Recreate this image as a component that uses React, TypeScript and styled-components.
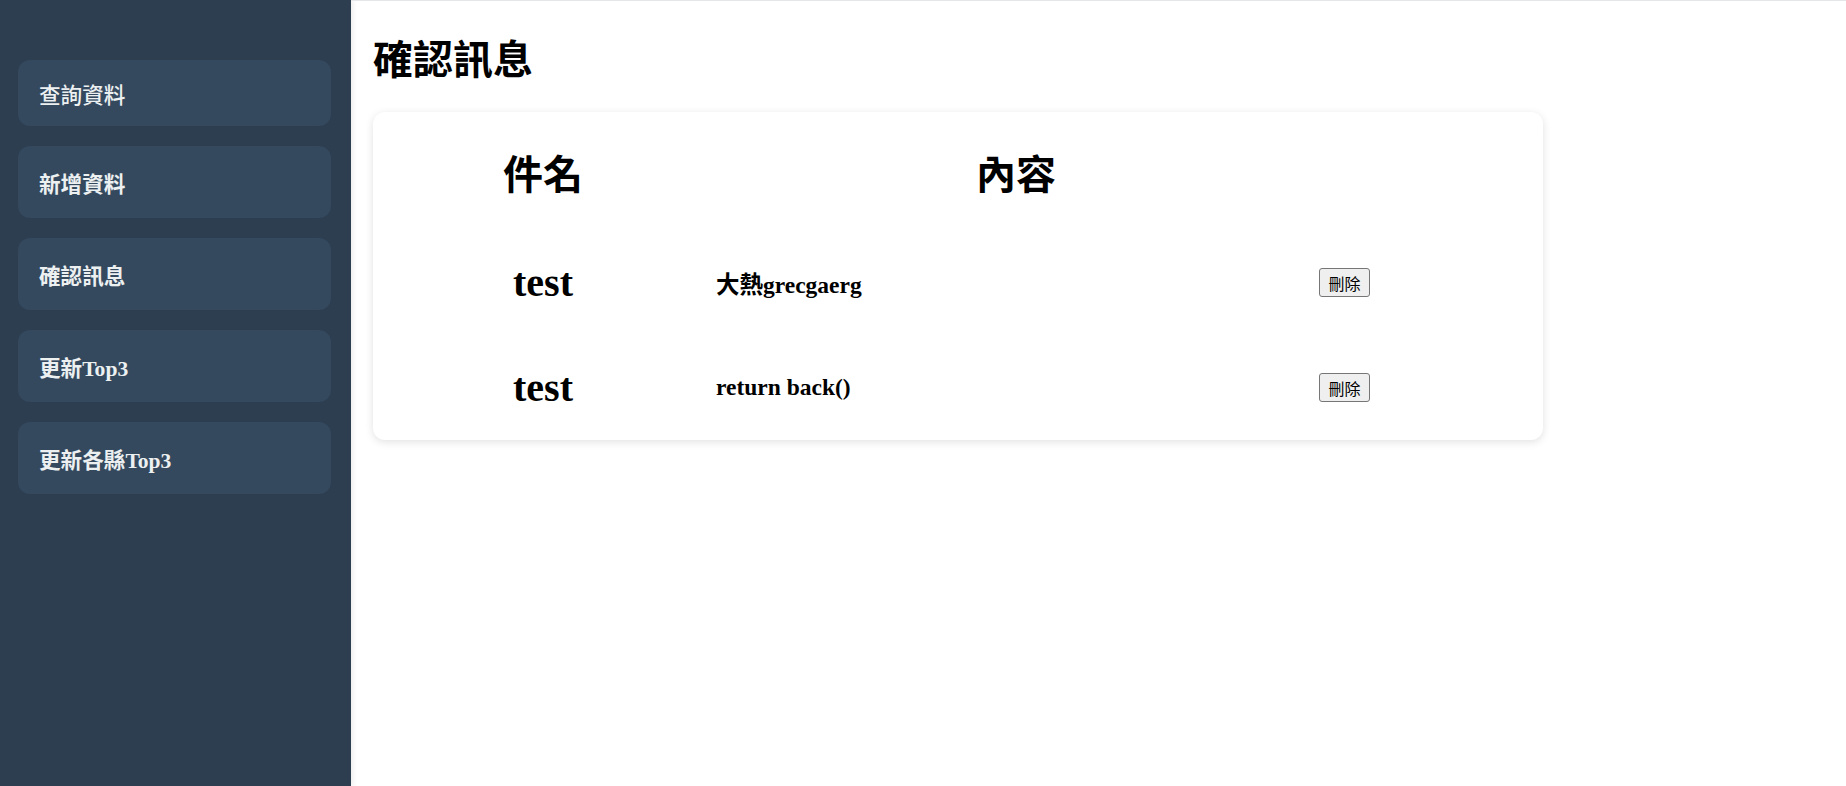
import { Fragment } from "react";
import styled, { createGlobalStyle } from "styled-components";

const GlobalStyle = createGlobalStyle`
  html, body {
    margin: 0;
    padding: 0;
    background: #ffffff;
  }
  body {
    font-family: "Liberation Serif", "Noto Sans CJK TC", serif;
  }
`;

const Layout = styled.div`
  display: flex;
  min-height: 100vh;
`;

// 왼쪽 메뉴
const Sidebar = styled.nav`
  width: 351px;
  flex-shrink: 0;
  background-color: #2c3e50;
  box-shadow: 2px 0 5px rgba(0, 0, 0, 0.08);
  padding: 60px 20px 0 18px;
  box-sizing: border-box;
  display: flex;
  flex-direction: column;
  gap: 20px;
`;

// 첫 번째 항목만 높이/굵기가 다름
const MenuItem = styled.div<{ $first?: boolean }>`
  height: ${(props) => (props.$first ? "66px" : "72px")};
  background-color: #34495e;
  border-radius: 12px;
  display: flex;
  align-items: center;
  padding-left: 21px;
  color: #ecf0f1;
  font-size: 21.6px;
  font-weight: ${(props) => (props.$first ? 500 : 700)};
  font-family: "Liberation Serif", "Noto Sans CJK TC", serif;
`;

const Main = styled.main`
  flex: 1;
  border-top: 1px solid #e4e6e8;
  padding: 27px 22px 0 22px;
`;

const Title = styled.h1`
  margin: 0 0 26px 0;
  font-size: 40px;
  line-height: 58px;
  font-weight: 700;
  font-family: "Noto Sans CJK TC", sans-serif;
  color: #000;
`;

const Card = styled.div`
  width: 1170px;
  height: 328px;
  box-sizing: border-box;
  background: #fff;
  border-radius: 12px;
  box-shadow: 0 2px 8px rgba(0, 0, 0, 0.12);
  display: grid;
  grid-template-columns: 340px 600px auto;
  grid-template-rows: 118px 105px 105px;
  column-gap: 3px;
  align-items: center;
`;

const HeadCell = styled.div`
  text-align: center;
  padding-top: 2px;
  font-size: 40px;
  font-weight: 700;
  font-family: "Noto Sans CJK TC", sans-serif;
`;

const NameCell = styled.div`
  text-align: center;
  font-size: 40px;
  font-weight: 700;
`;

const TextCell = styled.div`
  font-size: 23.5px;
  font-weight: 700;
`;

const DeleteButton = styled.button`
  width: 51px;
  height: 29px;
  padding: 0;
  box-sizing: border-box;
  border: 1px solid #767676;
  border-radius: 3px;
  background: #efefef;
  color: #000;
  font-size: 16px;
  font-family: "Noto Sans CJK TC", sans-serif;
  line-height: 1;
`;

const menu = ["查詢資料", "新增資料", "確認訊息", "更新Top3", "更新各縣Top3"];

const messages = [
  { name: "test", content: "大熱grecgaerg" },
  { name: "test", content: "return back()" },
];

function App() {
  return (
    <Layout>
      <GlobalStyle />
      <Sidebar>
        {menu.map((m, i) => (
          <MenuItem key={m} $first={i === 0}>
            {m}
          </MenuItem>
        ))}
      </Sidebar>
      <Main>
        <Title>確認訊息</Title>
        <Card>
          <HeadCell>件名</HeadCell>
          <HeadCell>內容</HeadCell>
          <div />
          {messages.map((msg, i) => (
            <Fragment key={i}>
              <NameCell>{msg.name}</NameCell>
              <TextCell>{msg.content}</TextCell>
              <div>
                <DeleteButton>刪除</DeleteButton>
              </div>
            </Fragment>
          ))}
        </Card>
      </Main>
    </Layout>
  );
}

export default App;
